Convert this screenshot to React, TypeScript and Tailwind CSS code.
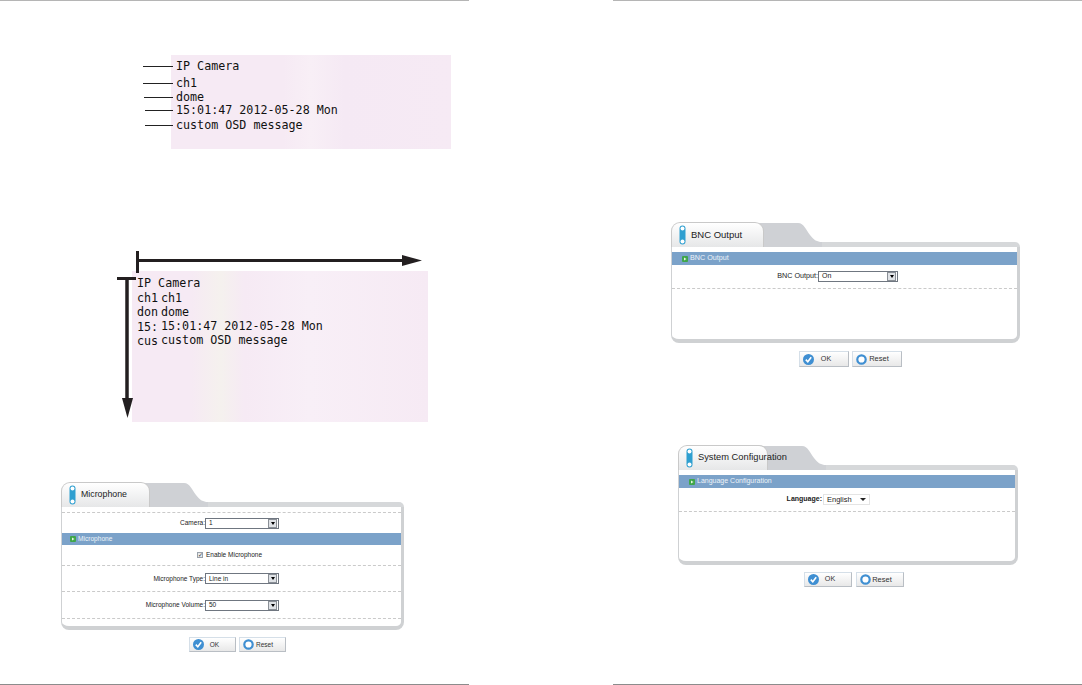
import type { ReactNode } from "react";

const osdRows = [
  { text: "IP Camera", lineClass: "w-[30px]", rowClass: "mt-[4px]" },
  { text: "ch1", lineClass: "w-[30px]", rowClass: "mt-[3px]" },
  { text: "dome", lineClass: "w-[29px] ml-[1px]", rowClass: "mt-0" },
  { text: "15:01:47 2012-05-28 Mon", lineClass: "w-[28px] ml-[2px]", rowClass: "-mt-[1px]" },
  { text: "custom OSD message", lineClass: "w-[28px] ml-[2px]", rowClass: "mt-[1px]" },
];

const clippedRows = [
  { left: "ch1", right: "ch1" },
  { left: "don", right: "dome" },
  { left: "15:", right: "15:01:47 2012-05-28 Mon" },
  { left: "cus", right: "custom OSD message" },
];

function PillIcon() {
  return (
    <svg width="7" height="20" viewBox="0 0 7 20" className="shrink-0">
      <rect x="0.5" y="0.5" width="6" height="19" rx="3" fill="#2f9fd0" />
      <circle cx="3.5" cy="3.5" r="2" fill="#fff" />
      <circle cx="3.5" cy="16.5" r="2" fill="#fff" />
    </svg>
  );
}

function GrayTab() {
  return (
    <svg width="66" height="25" viewBox="0 0 66 25" className="-ml-[8px] shrink-0">
      <path d="M0 1 H42 C48 1 50 8 54 13 C58 18 61 20 66 20 V25 H0 Z" fill="#cfd1d5" />
    </svg>
  );
}

function BarIcon() {
  return (
    <svg width="6" height="6" viewBox="0 0 6 6" className="shrink-0">
      <rect width="6" height="6" rx="1" fill="#3fa64a" />
      <path d="M2 1.5 L4.5 3 L2 4.5 Z" fill="#e8f5e0" />
    </svg>
  );
}

function Panel({
  title,
  tabClass,
  titleClass,
  panelClass,
  children,
}: {
  title: string;
  tabClass: string;
  titleClass: string;
  panelClass: string;
  children: ReactNode;
}) {
  return (
    <div className={panelClass}>
      <div className="flex h-[25px]">
        <div
          className={`relative z-10 flex shrink-0 items-center gap-[5px] rounded-t-[9px] border-x border-t border-[#c9c9c9] bg-gradient-to-b from-white to-[#e6e7e8] pl-[7px] ${tabClass}`}
        >
          <PillIcon />
          <span className={`text-[#222] ${titleClass}`}>{title}</span>
        </div>
        <GrayTab />
        <div className="h-[5px] flex-1 self-end rounded-tr-[6px] bg-[#d6d8da]" />
      </div>
      <div className="rounded-b-[8px] border-b-[4px] border-l border-r-[3px] border-[#cfd1d3] bg-white">
        {children}
      </div>
    </div>
  );
}

function BlueBar({ text, textClass, barClass }: { text: string; textClass: string; barClass: string }) {
  return (
    <div className={`flex items-center gap-[2px] bg-[#7ba2c9] ${barClass}`}>
      <BarIcon />
      <span className={`text-[#eef3f8] ${textClass}`}>{text}</span>
    </div>
  );
}

function SelectBox({ value, widthClass, textClass }: { value: string; widthClass: string; textClass: string }) {
  return (
    <div
      className={`flex h-[11px] items-center justify-between border border-[#6f7680] bg-white pl-[3px] pr-px ${widthClass}`}
    >
      <span className={`text-[#222] ${textClass}`}>{value}</span>
      <span className="flex h-[9px] w-[9px] items-center justify-center border border-[#8a8f96] bg-[#dfe2e6]">
        <span className="h-0 w-0 border-x-[2px] border-t-[3px] border-x-transparent border-t-black" />
      </span>
    </div>
  );
}

function FormRow({
  label,
  rowClass,
  labelClass,
  textClass,
  children,
}: {
  label: string;
  rowClass: string;
  labelClass: string;
  textClass: string;
  children: ReactNode;
}) {
  return (
    <div className={`flex items-center border-b border-dashed border-[#cacaca] ${rowClass}`}>
      <span className={`text-right text-[#222] ${labelClass} ${textClass}`}>{label}</span>
      {children}
    </div>
  );
}

function OkIcon() {
  return (
    <svg width="11" height="11" viewBox="0 0 11 11" className="shrink-0">
      <circle cx="5.5" cy="5.5" r="5.5" fill="#3f8fd2" />
      <path d="M2.8 5.6 L4.8 7.8 L8.2 3.2" fill="none" stroke="#fff" strokeWidth="1.6" />
    </svg>
  );
}

function ResetIcon() {
  return (
    <svg width="11" height="11" viewBox="0 0 11 11" className="shrink-0">
      <circle cx="5.5" cy="5.5" r="4.2" fill="#fff" stroke="#3f8fd2" strokeWidth="2.2" />
    </svg>
  );
}

function ActionButton({
  label,
  icon,
  sizeClass,
  textClass,
}: {
  label: string;
  icon: ReactNode;
  sizeClass: string;
  textClass: string;
}) {
  return (
    <div
      className={`flex items-center border border-[#d5dfe8] border-b-[#b9bec4] border-r-[#b9bec4] bg-gradient-to-b from-white to-[#e8e8e8] pl-[3px] pr-[10px] ${sizeClass}`}
    >
      {icon}
      <span className={`flex-1 text-center text-[#333] ${textClass}`}>{label}</span>
    </div>
  );
}

export default function App() {
  return (
    <div className="flex h-[685px] w-[1082px] overflow-hidden bg-white font-['Liberation_Sans',sans-serif]">
      {/* left page */}
      <div className="flex h-full w-[469px] flex-col">
        <div className="h-px bg-[#b5b5b5]" />

        <div className="ml-[171px] mt-[54px] h-[94px] w-[280px] bg-[#f6eaf4] bg-[linear-gradient(90deg,#f6eaf4_40%,#f8eff6_50%,#f5e9f4_62%,#f6eaf4_100%)] font-['DejaVu_Sans_Mono',monospace] text-[11.7px] text-[#111]">
          {osdRows.map((row) => (
            <div key={row.text} className={`-ml-[28px] flex h-[14px] items-center ${row.rowClass}`}>
              <span className={`h-px shrink-0 bg-[#222] ${row.lineClass}`} />
              <span className="whitespace-pre pl-[3px] pt-px">{row.text}</span>
            </div>
          ))}
        </div>

        <svg width="288" height="22" viewBox="0 0 288 22" className="relative z-10 -mb-[2px] ml-[135px] mt-[102px] shrink-0">
          <path d="M2.5 0 V22" stroke="#231f20" strokeWidth="3" />
          <path d="M2 9.5 H268" stroke="#231f20" strokeWidth="3" />
          <path d="M267 4 L287 9.5 L267 15 Z" fill="#231f20" />
        </svg>

        <div className="flex">
          <svg width="19" height="141" viewBox="0 0 19 141" className="relative z-10 ml-[117px] mt-[6px] shrink-0">
            <path d="M0 1.5 H19" stroke="#231f20" strokeWidth="3" />
            <path d="M10 1 V122" stroke="#231f20" strokeWidth="3.5" />
            <path d="M5 121 L16 121 L10.5 141 Z" fill="#231f20" />
          </svg>
          <div className="-ml-[4px] h-[151px] w-[296px] bg-[#f6eaf4] bg-[linear-gradient(90deg,#f6eaf4_20%,#f5f1ee_30%,#f6eaf4_38%,#f8eff7_60%,#f6eaf4_100%)] pl-[5px] pt-[6px] font-['DejaVu_Sans_Mono',monospace] text-[11.7px] text-[#111]">
            <div className="flex h-[14.25px] items-center">IP Camera</div>
            {clippedRows.map((row) => (
              <div key={row.right} className="flex h-[14.25px] items-center">
                <span className="w-[24px] shrink-0 pt-px">{row.left}</span>
                <span className="whitespace-pre">{row.right}</span>
              </div>
            ))}
          </div>
        </div>

        <Panel
          title="Microphone"
          panelClass="ml-[61px] mt-[60px] w-[343px]"
          tabClass="w-[89px]"
          titleClass="text-[8.8px]"
        >
          <div className="h-[6px] border-b border-dashed border-[#cacaca]" />
          <div className="flex h-[20px] items-center">
            <span className="w-[143px] text-right text-[6.5px] text-[#222]">Camera:</span>
            <SelectBox value="1" widthClass="w-[74px]" textClass="text-[6.5px]" />
          </div>
          <BlueBar text="Microphone" textClass="text-[6.6px]" barClass="h-[12px] pl-[8px]" />
          <div className="flex h-[21px] items-center border-b border-dashed border-[#cacaca]">
            <span className="ml-[135px] flex h-[6px] w-[6px] items-center justify-center border border-[#9aa2ab] bg-[#e6e9ec] text-[6px] leading-none text-[#333]">
              ✓
            </span>
            <span className="ml-[3px] text-[6.5px] text-[#222]">Enable Microphone</span>
          </div>
          <FormRow label="Microphone Type:" rowClass="h-[26px]" labelClass="w-[143px]" textClass="text-[6.5px]">
            <SelectBox value="Line in" widthClass="w-[74px]" textClass="text-[6.5px]" />
          </FormRow>
          <FormRow label="Microphone Volume:" rowClass="h-[27px]" labelClass="w-[143px]" textClass="text-[6.5px]">
            <SelectBox value="50" widthClass="w-[74px]" textClass="text-[6.5px]" />
          </FormRow>
          <div className="h-[7px]" />
        </Panel>
        <div className="ml-[189px] mt-[7px] flex gap-[3px]">
          <ActionButton label="OK" icon={<OkIcon />} sizeClass="h-[15px] w-[47px]" textClass="text-[6.5px]" />
          <ActionButton label="Reset" icon={<ResetIcon />} sizeClass="h-[15px] w-[47px]" textClass="text-[6.5px]" />
        </div>

        <div className="mt-auto h-px bg-[#8c8c8c]" />
      </div>

      {/* right page */}
      <div className="ml-[144px] flex h-full w-[469px] flex-col">
        <div className="h-px bg-[#b5b5b5]" />

        <Panel
          title="BNC Output"
          panelClass="ml-[58px] mt-[221px] w-[349px]"
          tabClass="w-[93px]"
          titleClass="text-[9.5px]"
        >
          <div className="h-[5px]" />
          <BlueBar text="BNC Output" textClass="text-[7.2px]" barClass="h-[13px] pl-[10px]" />
          <FormRow label="BNC Output:" rowClass="h-[24px]" labelClass="w-[146px]" textClass="text-[7.2px]">
            <SelectBox value="On" widthClass="w-[80px]" textClass="text-[7px]" />
          </FormRow>
          <div className="h-[50px]" />
        </Panel>
        <div className="ml-[186px] mt-[8px] flex gap-[3px]">
          <ActionButton label="OK" icon={<OkIcon />} sizeClass="h-[16px] w-[50px]" textClass="text-[7.2px]" />
          <ActionButton label="Reset" icon={<ResetIcon />} sizeClass="h-[16px] w-[50px]" textClass="text-[7.5px]" />
        </div>

        <Panel
          title="System Configuration"
          panelClass="ml-[65px] mt-[78px] w-[340px]"
          tabClass="w-[90px]"
          titleClass="whitespace-nowrap text-[9.3px]"
        >
          <div className="h-[5px]" />
          <BlueBar text="Language Configuration" textClass="text-[7px]" barClass="h-[13px] pl-[10px]" />
          <FormRow label="Language:" rowClass="h-[24px]" labelClass="w-[143px]" textClass="text-[7px] font-semibold">
            <div className="ml-px flex h-[11px] w-[47px] items-center justify-between border border-[#e4e4e4] bg-white pl-[3px] pr-[3px]">
              <span className="text-[7.5px] text-[#222]">English</span>
              <span className="h-0 w-0 border-x-[3px] border-t-[3px] border-x-transparent border-t-[#222]" />
            </div>
          </FormRow>
          <div className="h-[49px]" />
        </Panel>
        <div className="ml-[191px] mt-[7px] flex gap-[4px]">
          <ActionButton label="OK" icon={<OkIcon />} sizeClass="h-[15px] w-[48px]" textClass="text-[7.2px]" />
          <ActionButton label="Reset" icon={<ResetIcon />} sizeClass="h-[15px] w-[48px]" textClass="text-[7.5px]" />
        </div>

        <div className="mt-auto h-px bg-[#8c8c8c]" />
      </div>
    </div>
  );
}
